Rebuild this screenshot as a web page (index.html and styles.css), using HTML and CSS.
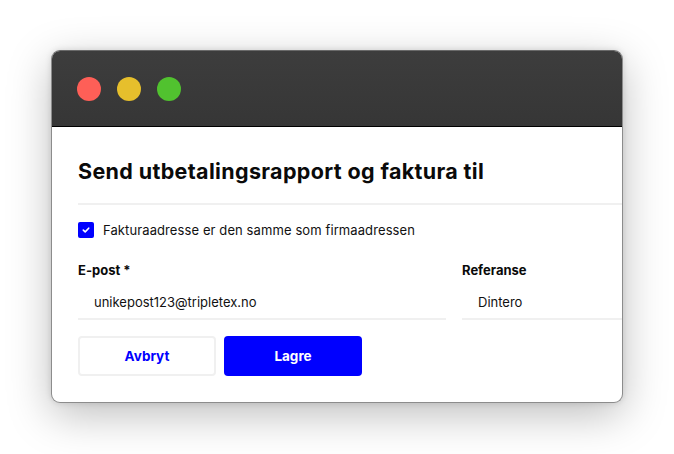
FILE: index.html
```html
<!DOCTYPE html>
<html>
<head>
<link rel="stylesheet" href="styles.css">
</head>
<body>
<div class="window">
  <div class="titlebar">
    <span class="dot red"></span>
    <span class="dot yellow"></span>
    <span class="dot green"></span>
  </div>

  <!-- form content -->
  <div class="content">
    <h1 class="title">Send utbetalingsrapport og faktura til</h1>
    <div class="divider"></div>

    <label class="check">
      <span class="box">
        <svg width="8" height="8" viewBox="0 0 8 8"><path d="M1.3 4.1 L3.2 5.9 L6.7 2.2" fill="none" stroke="#fff" stroke-width="1.6" stroke-linecap="round" stroke-linejoin="round"/></svg>
      </span>
      Fakturaadresse er den samme som firmaadressen
    </label>

    <div class="fields">
      <div class="field">
        <div class="label">E-post *</div>
        <div class="input">unikepost123@tripletex.no</div>
      </div>
      <div class="field">
        <div class="label">Referanse</div>
        <div class="input">Dintero</div>
      </div>
    </div>

    <div class="actions">
      <button class="btn btn-secondary">Avbryt</button>
      <button class="btn btn-primary">Lagre</button>
    </div>
  </div>
</div>
</body>
</html>
```

FILE: styles.css
```css
html, body {
  height: 100%;
}

body {
  margin: 0;
  padding: 50px 0 0 51px;
  box-sizing: border-box;
  background-color: #fff;
  font-family: Inter, "Noto Sans", sans-serif;
}

.window {
  width: 572px;
  height: 353px;
  box-sizing: border-box;
  border: 1px solid #8c8c8c;
  border-top-color: #6a6a6a;
  border-radius: 9px;
  overflow: hidden;
  background-color: #fff;
  box-shadow: 0 12px 44px rgba(0,0,0,0.26), 0 0 6px rgba(0,0,0,0.12);
}

.titlebar {
  height: 75px;
  display: flex;
  align-items: center;
  gap: 16px;
  padding-left: 25px;
  background: linear-gradient(#3d3d3d, #363636);
  border-bottom: 1px solid #000;
}

.dot {
  width: 24px;
  height: 24px;
  border-radius: 50%;
  display: inline-block;
}
.red { background-color: #fe5f57; }
.yellow { background-color: #e6bf2c; }
.green { background-color: #51c22f; }

.content {
  padding: 30px 0 0 26px;
  width: 760px;
}

.title {
  margin: 0;
  font-size: 21.5px;
  font-weight: 700;
  letter-spacing: 0.35px;
  color: #0a0a0a;
  line-height: 28px;
}

.divider {
  height: 2px;
  background-color: #f0f0f0;
  margin-top: 18px;
}

.check {
  display: flex;
  align-items: center;
  gap: 9px;
  margin-top: 16px;
  font-size: 13px;
  letter-spacing: 0.1px;
  color: #111;
  line-height: 18px;
}

.box {
  width: 16px;
  height: 16px;
  border-radius: 2px;
  background-color: #0000ff;
  display: flex;
  align-items: center;
  justify-content: center;
}

.fields {
  display: grid;
  grid-template-columns: 368px 368px;
  column-gap: 16px;
  margin-top: 22px;
}

.label {
  font-size: 13px;
  font-weight: 700;
  color: #0a0a0a;
  line-height: 18px;
}

.input {
  margin-top: 14px;
  padding: 0 0 7px 16px;
  font-size: 13px;
  color: #111;
  line-height: 18px;
  border-bottom: 2px solid #f0f0f0;
}

.actions {
  display: flex;
  gap: 8px;
  margin-top: 16px;
}

.btn {
  width: 138px;
  height: 40px;
  border-radius: 4px;
  font-family: Inter, "Noto Sans", sans-serif;
  font-size: 13.5px;
  font-weight: 700;
  cursor: pointer;
}

.btn-secondary {
  background-color: #fff;
  border: 2px solid #f0f0f0;
  color: #0000ff;
}

.btn-primary {
  background-color: #0000ff;
  border: none;
  color: #fff;
}
```
